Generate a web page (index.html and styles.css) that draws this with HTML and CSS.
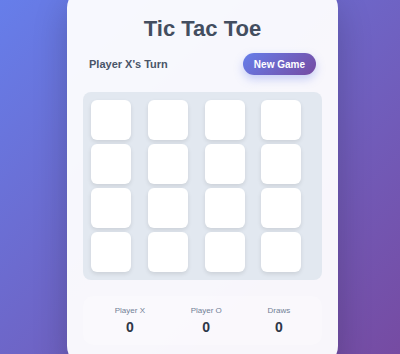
FILE: index.html
```html
<!DOCTYPE html>
<html lang="en">
<head>
  <meta charset="UTF-8">
  <meta name="viewport" content="width=device-width, initial-scale=1.0">
  <title>Tic Tac Toe</title>
  <link rel="stylesheet" href="styles.css">
</head>
<body>
<div class="game-card">
  <h1 class="title">Tic Tac Toe</h1>

  <div class="game-header">
    <div class="status">Player X's Turn</div>
    <button type="button" class="new-game">New Game</button>
  </div>

  <div class="board">
    <div class="cell"></div>
    <div class="cell"></div>
    <div class="cell"></div>
    <div class="cell"></div>
    <div class="cell"></div>
    <div class="cell"></div>
    <div class="cell"></div>
    <div class="cell"></div>
    <div class="cell"></div>
    <div class="cell"></div>
    <div class="cell"></div>
    <div class="cell"></div>
    <div class="cell"></div>
    <div class="cell"></div>
    <div class="cell"></div>
    <div class="cell"></div>
  </div>

  <div class="scores">
    <div class="score">
      <div class="score-label">Player X</div>
      <div class="score-value">0</div>
    </div>
    <div class="score">
      <div class="score-label">Player O</div>
      <div class="score-value">0</div>
    </div>
    <div class="score">
      <div class="score-label">Draws</div>
      <div class="score-value">0</div>
    </div>
  </div>
</div>
</body>
</html>
```

FILE: styles.css
```css
* {
  box-sizing: border-box;
}

body {
  margin: 0;
  height: 100vh;
  overflow: hidden;
  font-family: "Liberation Sans", Arial, sans-serif;
  background: linear-gradient(135deg, #667eea 0%, #764ba2 100%);
}

.game-card {
  width: 271px;
  margin: -12px 0 0 67px;
  padding: 16px 16px 21px;
  background: rgba(255, 255, 255, 0.95);
  border-radius: 20px;
  box-shadow: 0 15px 35px rgba(0, 0, 0, 0.2);
}

.title {
  margin: 12px 0 0;
  font-size: 22px;
  line-height: 26px;
  font-weight: bold;
  text-align: center;
  color: #434e60;
}

.game-header {
  display: flex;
  justify-content: space-between;
  align-items: center;
  margin-top: 11px;
  padding: 0 6px;
}

.status {
  font-size: 11px;
  font-weight: bold;
  color: #4a5568;
}

.new-game {
  height: 22px;
  padding: 0 11px;
  border: none;
  border-radius: 11px;
  font-family: inherit;
  font-size: 10px;
  font-weight: bold;
  color: #fff;
  background: linear-gradient(135deg, #667eea 0%, #764ba2 100%);
  box-shadow: 0 4px 10px rgba(102, 126, 234, 0.35);
}

.board {
  display: grid;
  grid-template-columns: repeat(4, 1fr);
  gap: 4px;
  margin-top: 17px;
  padding: 8px;
  background: #e2e8f0;
  border-radius: 8px;
}

.cell {
  width: 40px;
  height: 40px;
  background: #fff;
  border-radius: 6px;
  box-shadow: 0 2px 4px rgba(0, 0, 0, 0.1);
}

.scores {
  display: flex;
  justify-content: space-evenly;
  margin-top: 16px;
  padding: 10px 0;
  border-radius: 10px;
  background: rgba(255, 255, 255, 0.25);
}

.score {
  padding: 0 14px;
  text-align: center;
}

.score-label {
  font-size: 8px;
  line-height: 10px;
  color: #718096;
}

.score-value {
  margin-top: 3px;
  font-size: 14px;
  line-height: 16px;
  font-weight: bold;
  color: #2d3748;
}
```
